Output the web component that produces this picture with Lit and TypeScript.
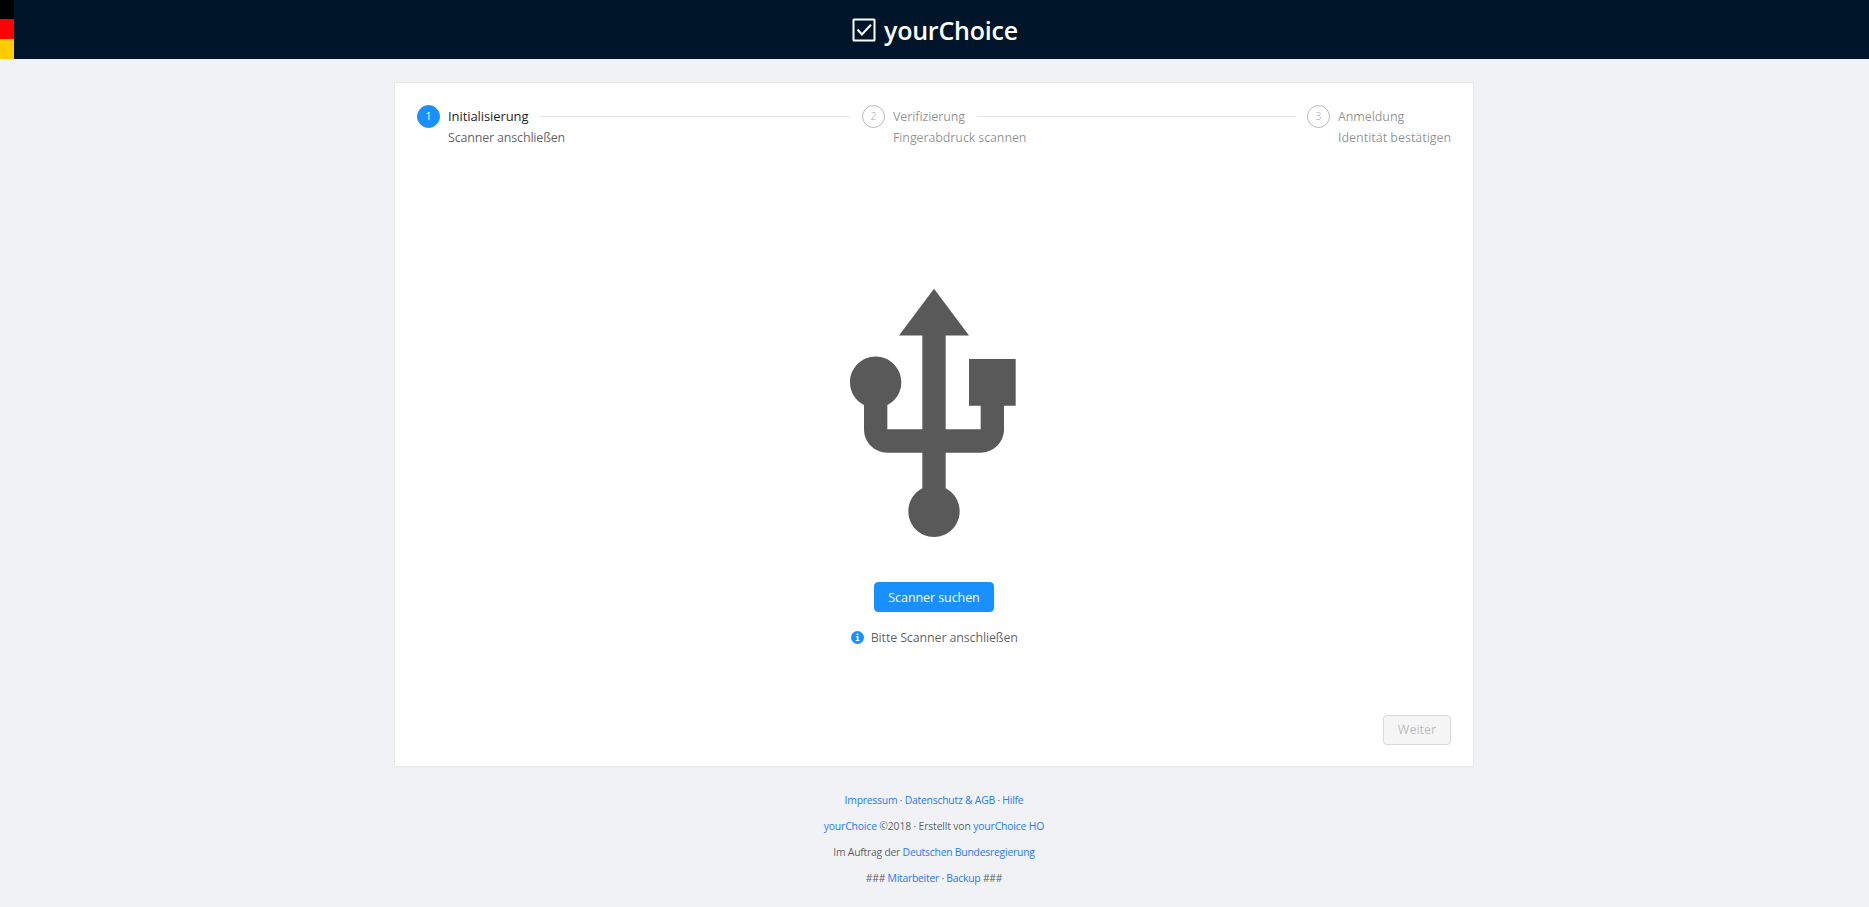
import { LitElement, html, css } from "lit";
import { customElement, property } from "lit/decorators.js";
import { classMap } from "lit/directives/class-map.js";

@customElement("wizard-step")
export class WizardStep extends LitElement {
  @property({ type: Number }) number = 1;
  @property() heading = "";
  @property() description = "";
  @property({ type: Boolean }) active = false;
  @property({ type: Boolean }) last = false;

  static styles = css`
    :host { display: block; }
    .step { display: flex; gap: 8px; color: rgba(0, 0, 0, 0.45); white-space: nowrap; }
    .circle {
      box-sizing: border-box; width: 23px; height: 23px; flex: none; border-radius: 50%;
      border: 1px solid rgba(0, 0, 0, 0.27); color: rgba(0, 0, 0, 0.27);
      font-size: 10.5px; line-height: 21px; text-align: center;
    }
    .body { flex: 1; }
    .heading { display: flex; align-items: center; line-height: 23px; height: 22px; letter-spacing: -0.1px; }
    .line { flex: 1; height: 1px; background: #e3e3e3; margin: 0 11px 0 12px; }
    .description { line-height: 21px; letter-spacing: -0.12px; }
    .last .description { letter-spacing: -0.02px; }
    .active .circle { background: #1890ff; border-color: #1890ff; color: #fff; }
    .active .heading { color: rgba(0, 0, 0, 0.9); font-size: 13px; line-height: 22px; letter-spacing: -0.08px; }
    .active .description { color: rgba(0, 0, 0, 0.65); letter-spacing: -0.18px; }
  `;

  render() {
    return html`
      <div class=${classMap({ step: true, active: this.active, last: this.last })}>
        <div class="circle">${this.number}</div>
        <div class="body">
          <div class="heading">${this.heading}${this.last ? "" : html`<span class="line"></span>`}</div>
          <div class="description">${this.description}</div>
        </div>
      </div>
    `;
  }
}

@customElement("app-root")
export class AppRoot extends LitElement {
  static styles = css`
    :host {
      display: block; min-height: 907px; background: #f0f2f5; color: rgba(0, 0, 0, 0.65);
      font-family: "Open Sans", "Noto Sans", sans-serif; font-size: 12.5px;
    }
    header { display: flex; height: 59px; background: #001529; }
    .flag { width: 14px; display: grid; grid-template-rows: 19px 20px 20px; }
    .black { background: #000; }
    .red { background: #f00; }
    .gold { background: #fc0; }
    .brand {
      flex: 1; display: flex; align-items: center; justify-content: center; gap: 8px;
      margin-right: 13px; color: #fff; font-size: 25px; font-weight: 600; letter-spacing: -0.2px;
    }
    .brand span { line-height: 57px; padding-top: 2px; }
    .brand svg { width: 24px; height: 24px; display: block; }
    .page { padding-right: 1px; }
    main {
      box-sizing: border-box; width: 1080px; height: 685px; margin: 23px auto 0; padding: 22px 22px 21px;
      background: #fff; border: 1px solid #e8e8e8; display: flex; flex-direction: column;
    }
    .steps { display: grid; grid-template-columns: 445px 445px auto; }
    .content { display: flex; flex-direction: column; align-items: center; margin-top: 129px; flex: 1; }
    .usb { width: 280px; height: 281px; fill: #595959; display: block; }
    button {
      box-sizing: border-box; height: 30px; font: inherit; border-radius: 4px; padding: 0;
      line-height: 28px; text-align: center;
    }
    .primary {
      width: 120px; margin-top: 24px; background: #1890ff; border: 1px solid #1890ff; color: #fff;
      letter-spacing: -0.08px; padding-top: 1px;
    }
    .notice { display: flex; align-items: center; gap: 6.5px; margin: 15.5px 0 0 1px; line-height: 20px; letter-spacing: -0.15px; }
    .notice svg { width: 13px; height: 13px; display: block; }
    .next {
      width: 68px; align-self: flex-end; background: #f5f5f5; border: 1px solid #d9d9d9;
      color: rgba(0, 0, 0, 0.27);
    }
    footer { display: flex; flex-direction: column; align-items: center; gap: 9.3px; padding-top: 24.5px; font-size: 10.4px; }
    footer div { line-height: 17px; white-space: nowrap; }
    .legal { letter-spacing: -0.24px; }
    .copyright { letter-spacing: -0.16px; }
    .client { letter-spacing: -0.24px; }
    .staff { letter-spacing: -0.26px; }
    a { color: #2a7bf0; text-decoration: none; }
  `;

  render() {
    return html`
      <header>
        <div class="flag"><div class="black"></div><div class="red"></div><div class="gold"></div></div>
        <div class="brand">
          <svg viewBox="0 0 24 24" fill="none" stroke="#fff" stroke-width="2">
            <rect x="1.5" y="1.5" width="21" height="21" rx="0.5"></rect>
            <path d="M5.5 11.5l4.4 5L19 6.8"></path>
          </svg>
          <span>yourChoice</span>
        </div>
      </header>
      <div class="page">
        <main>
          <div class="steps">
            <wizard-step number="1" heading="Initialisierung" description="Scanner anschließen" active></wizard-step>
            <wizard-step number="2" heading="Verifizierung" description="Fingerabdruck scannen"></wizard-step>
            <wizard-step number="3" heading="Anmeldung" description="Identität bestätigen" last></wizard-step>
          </div>
          <div class="content">
            <svg class="usb" viewBox="0 0 24 24" preserveAspectRatio="none">
              <path d="M15 7v4h1v2h-3V5h2l-3-4-3 4h2v8H8v-2.07c.7-.37 1.2-1.08 1.2-1.93 0-1.21-.99-2.2-2.2-2.2-1.21 0-2.2.99-2.2 2.2 0 .85.5 1.56 1.2 1.93V13c0 1.11.89 2 2 2h3v3.05c-.71.37-1.2 1.1-1.2 1.95 0 1.22.99 2.2 2.2 2.2 1.21 0 2.2-.98 2.2-2.2 0-.85-.49-1.58-1.2-1.95V15h3c1.11 0 2-.89 2-2v-2h1V7h-4z"></path>
            </svg>
            <button class="primary">Scanner suchen</button>
            <div class="notice">
              <svg viewBox="0 0 13 13">
                <circle cx="6.5" cy="6.5" r="6.5" fill="#1890ff"></circle>
                <path d="M5.7 2.6h1.7v1.6H5.7zM4.8 5.3h2.6v3.6h1v1H4.7v-1h1.2V6.3H4.8z" fill="#fff"></path>
              </svg>
              <span>Bitte Scanner anschließen</span>
            </div>
          </div>
          <button class="next" disabled>Weiter</button>
        </main>
        <footer>
          <div class="legal"><a>Impressum</a> · <a>Datenschutz &amp; AGB</a> · <a>Hilfe</a></div>
          <div class="copyright"><a>yourChoice</a> ©2018 · Erstellt von <a>yourChoice HO</a></div>
          <div class="client">Im Auftrag der <a>Deutschen Bundesregierung</a></div>
          <div class="staff">### <a>Mitarbeiter</a> · <a>Backup</a> ###</div>
        </footer>
      </div>
    `;
  }
}
